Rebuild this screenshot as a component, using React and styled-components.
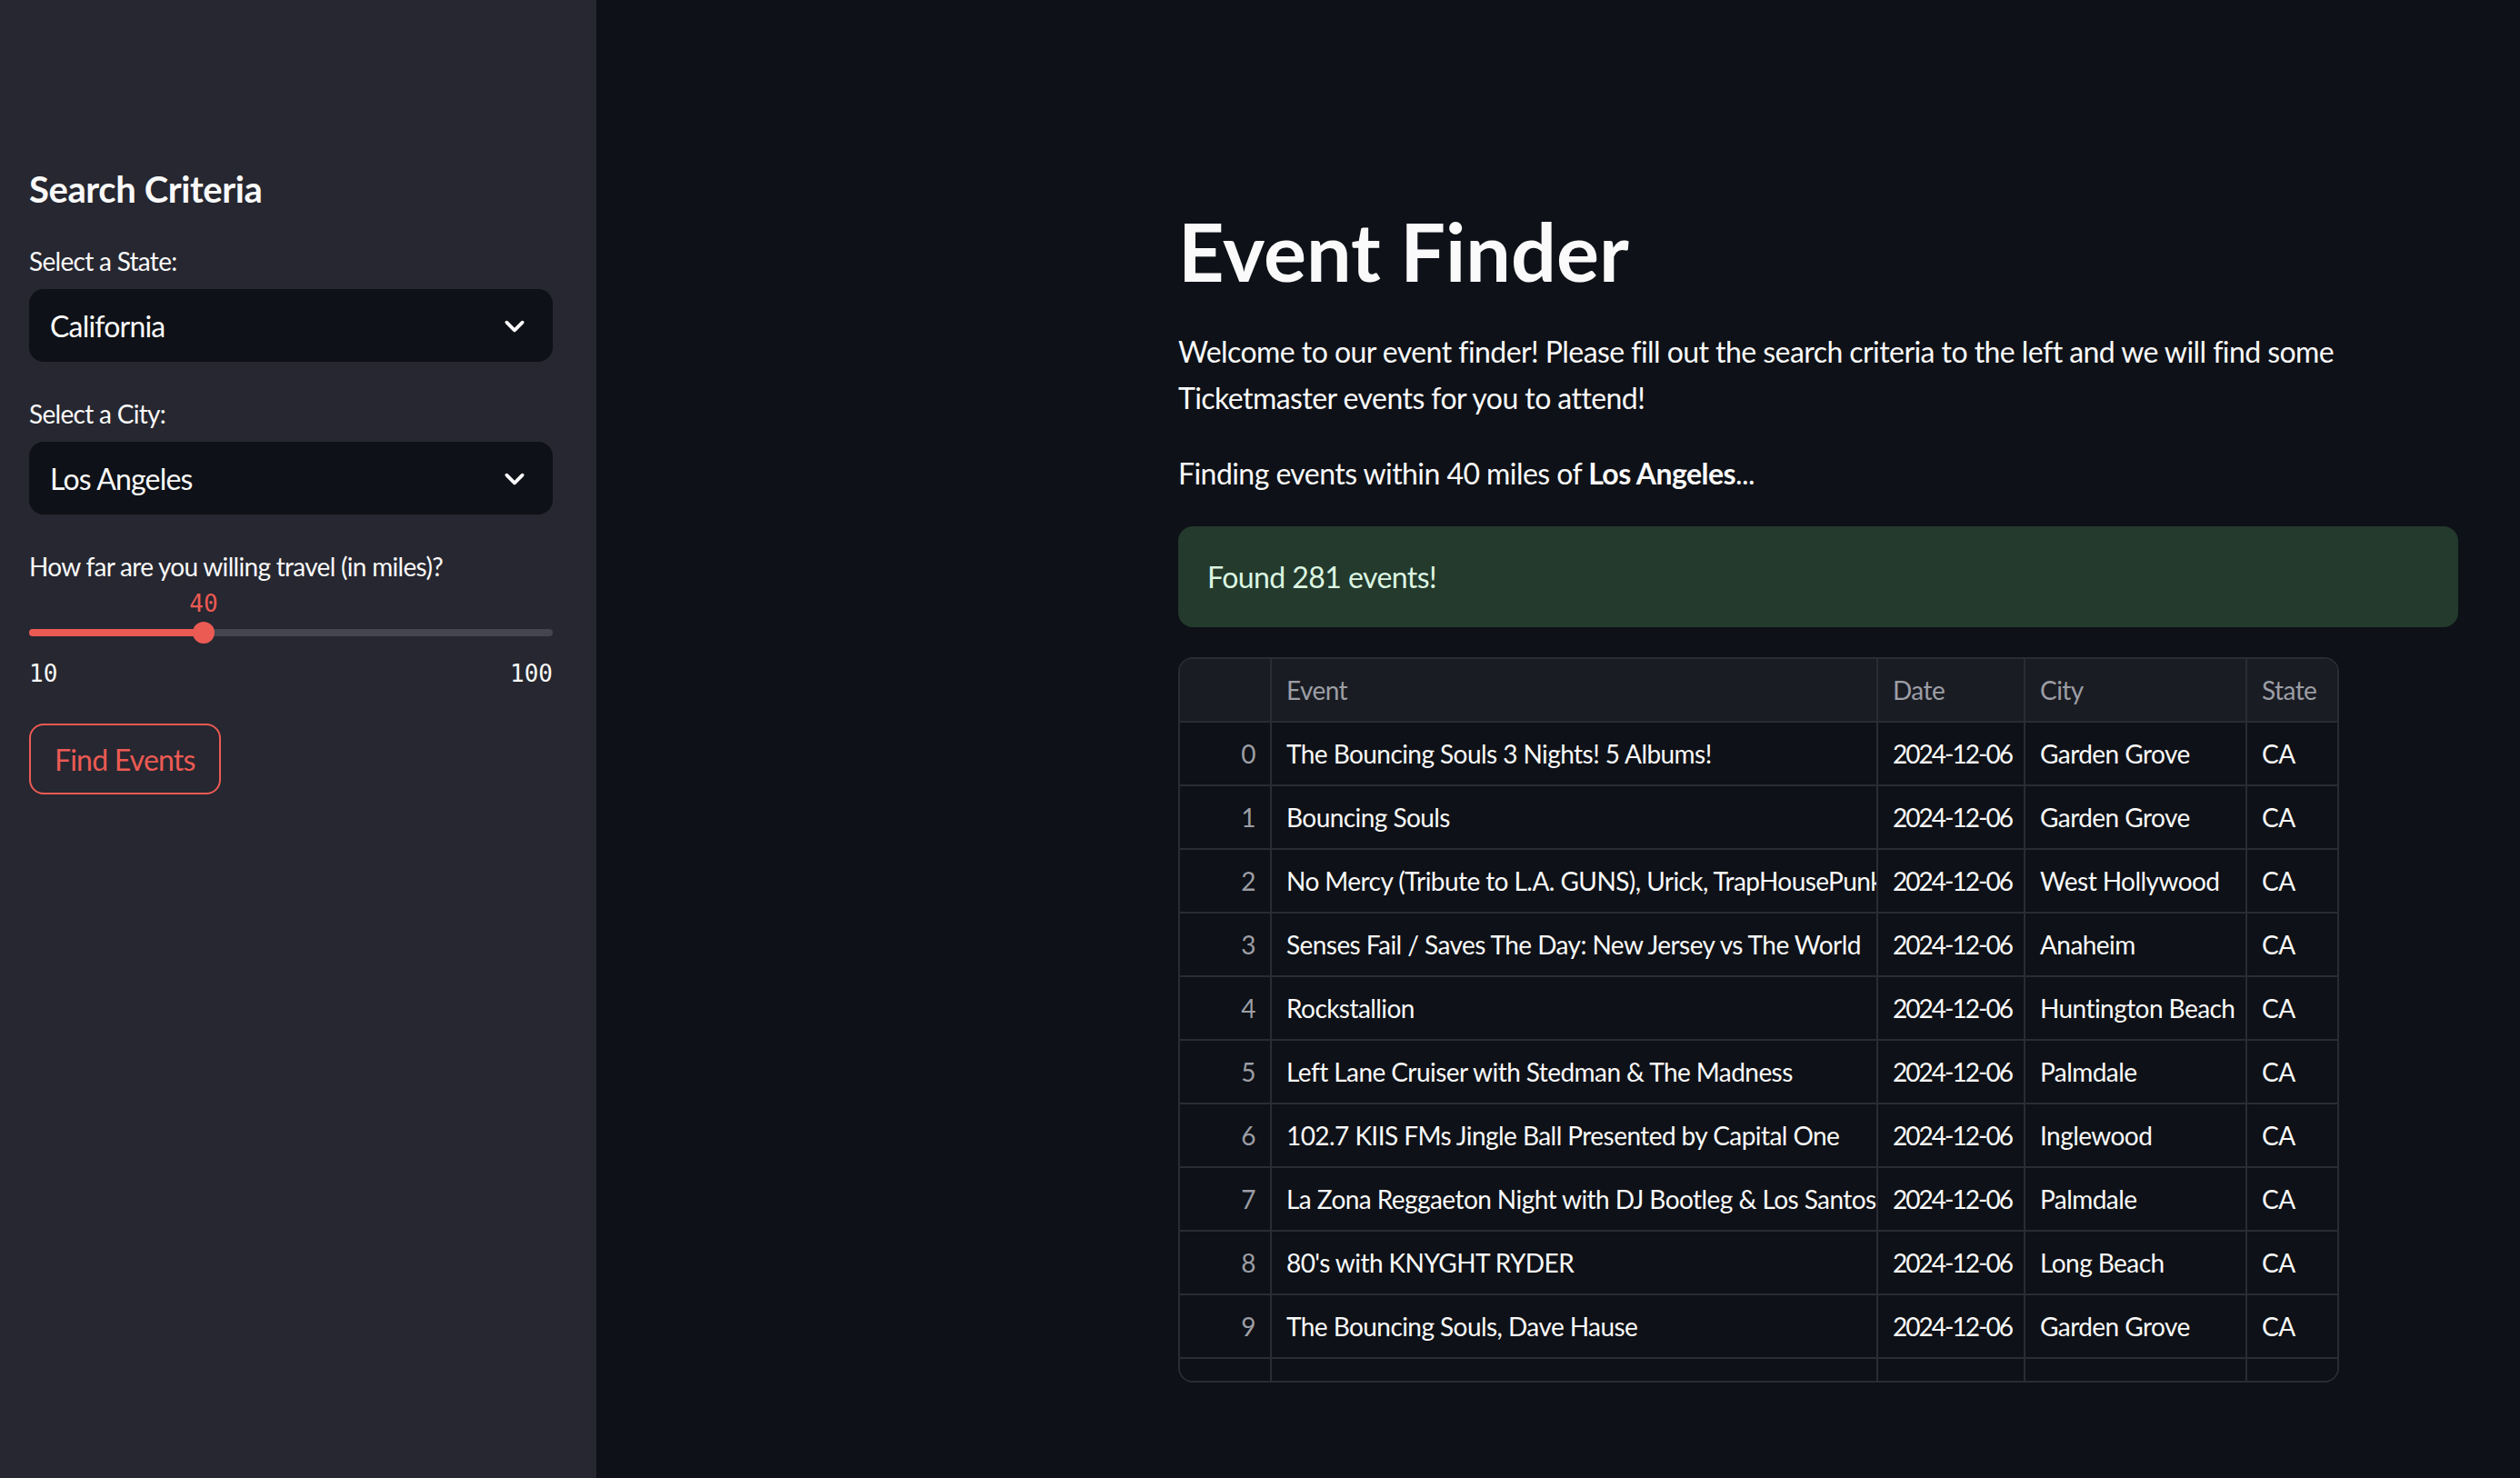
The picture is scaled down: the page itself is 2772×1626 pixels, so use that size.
import React from "react";
import styled, { createGlobalStyle } from "styled-components";

const GlobalStyle = createGlobalStyle`
  html, body {
    margin: 0;
    padding: 0;
    background: #0e1117;
  }
  body {
    font-family: Lato, "Noto Sans", sans-serif;
    letter-spacing: -0.035em;
    color: #fafafa;
  }
  * {
    box-sizing: border-box;
  }
`;

const RED = "#ec5a54";

const Page = styled.div`
  display: flex;
  height: 100vh;
  overflow: hidden;
`;

const Sidebar = styled.aside`
  width: 656px;
  flex-shrink: 0;
  background: #262730;
  padding: 184px 48px 0 32px;
  display: flex;
  flex-direction: column;
`;

const SideHeading = styled.h2`
  margin: 0 0 34px;
  font-size: 40px;
  line-height: 48px;
  font-weight: 700;
  letter-spacing: -0.01em;
`;

const Field = styled.div`
  display: flex;
  flex-direction: column;
  margin-bottom: 36px;
`;

const Label = styled.label`
  display: block;
  font-size: 28px;
  line-height: 42px;
  margin-bottom: 10px;
  letter-spacing: -0.025em;
`;

const Select = styled.div`
  height: 80px;
  border-radius: 16px;
  background: #0e1117;
  padding: 0 26px 0 23px;
  display: flex;
  align-items: center;
  justify-content: space-between;
  font-size: 32px;
  letter-spacing: -0.025em;
`;

const SliderBody = styled.div`
  position: relative;
  height: 54px;
  padding-top: 30px;
`;

const SliderValue = styled.span`
  position: absolute;
  top: -4px;
  transform: translateX(-50%);
  font-family: "DejaVu Sans Mono", "Liberation Mono", monospace;
  letter-spacing: 0;
  font-size: 26px;
  line-height: 28px;
  color: ${RED};
`;

const Track = styled.div`
  position: relative;
  height: 24px;
  display: flex;
  align-items: center;
`;

const Rail = styled.div`
  width: 100%;
  height: 8px;
  border-radius: 4px;
  background: #44454e;
  overflow: hidden;
`;

const Fill = styled.div`
  height: 100%;
  background: ${RED};
`;

const Thumb = styled.span`
  position: absolute;
  top: 0;
  width: 24px;
  height: 24px;
  border-radius: 50%;
  background: ${RED};
  transform: translateX(-50%);
`;

const MinMax = styled.div`
  display: flex;
  justify-content: space-between;
  margin-top: 19px;
  font-family: "DejaVu Sans Mono", "Liberation Mono", monospace;
  letter-spacing: 0;
  font-size: 26px;
  line-height: 28px;
`;

const Button = styled.button`
  align-self: flex-start;
  margin-top: 41px;
  height: 78px;
  padding: 0 26px;
  background: transparent;
  border: 2px solid ${RED};
  border-radius: 16px;
  color: ${RED};
  font-family: inherit;
  letter-spacing: -0.025em;
  font-size: 32px;
`;

const Main = styled.main`
  flex: 1;
  padding: 183px 0 0 640px;
`;

const Content = styled.div`
  width: 1408px;
`;

const Title = styled.h1`
  margin: 0;
  padding: 40px 0 32px;
  font-size: 88px;
  line-height: 106px;
  font-weight: 700;
  letter-spacing: 0;
`;

const Para = styled.p`
  margin: 0 0 32px;
  font-size: 32px;
  line-height: 51.2px;
`;

const Alert = styled.div`
  margin-bottom: 33px;
  padding: 30px 32px;
  border-radius: 16px;
  background: #233a2c;
  color: #dcf5e2;
  font-size: 32px;
  line-height: 51.2px;
`;

const Table = styled.div`
  width: 1277px;
  height: 798px;
  border: 2px solid #2a2c34;
  border-radius: 16px;
  overflow: hidden;
  display: grid;
  grid-template-columns: 101px 667px 162px 244px 99px;
  grid-auto-rows: 70px;
`;

const Cell = styled.div`
  display: flex;
  align-items: center;
  justify-content: ${(p) => (p.$index ? "flex-end" : "flex-start")};
  padding: 0 16px;
  border-bottom: 2px solid #2a2c34;
  border-right: ${(p) => (p.$last ? "none" : "2px solid #2a2c34")};
  background: ${(p) => (p.$head ? "#1a1c23" : "#0e1117")};
  color: ${(p) => (p.$head || p.$index ? "#9c9ea5" : "#fafafa")};
  font-size: 28px;
  letter-spacing: ${(p) => (p.$tight ? "-0.07em" : "inherit")};
  white-space: nowrap;
  overflow: hidden;
`;

const Chevron = () => (
  <svg width="32" height="32" viewBox="0 0 24 24" fill="none">
    <path d="M5.5 9.5l6.5 6.5 6.5-6.5" stroke="#fafafa" strokeWidth="2.8" strokeLinecap="round" strokeLinejoin="round" />
  </svg>
);

const events = [
  ["The Bouncing Souls 3 Nights! 5 Albums!", "2024-12-06", "Garden Grove"],
  ["Bouncing Souls", "2024-12-06", "Garden Grove"],
  ["No Mercy (Tribute to L.A. GUNS), Urick, TrapHousePunk,", "2024-12-06", "West Hollywood"],
  ["Senses Fail / Saves The Day: New Jersey vs The World", "2024-12-06", "Anaheim"],
  ["Rockstallion", "2024-12-06", "Huntington Beach"],
  ["Left Lane Cruiser with Stedman & The Madness", "2024-12-06", "Palmdale"],
  ["102.7 KIIS FMs Jingle Ball Presented by Capital One", "2024-12-06", "Inglewood"],
  ["La Zona Reggaeton Night with DJ Bootleg & Los Santos", "2024-12-06", "Palmdale"],
  ["80's with KNYGHT RYDER", "2024-12-06", "Long Beach"],
  ["The Bouncing Souls, Dave Hause", "2024-12-06", "Garden Grove"],
  ["Bouncing Souls", "2024-12-07", "Garden Grove"],
];

const MIN = 10;
const MAX = 100;
const distance = 40;

export default function App() {
  const pct = ((distance - MIN) / (MAX - MIN)) * 100;

  return (
    <>
      <GlobalStyle />
      <Page>
        <Sidebar>
          <SideHeading>Search Criteria</SideHeading>
          <Field>
            <Label>Select a State:</Label>
            <Select>
              California
              <Chevron />
            </Select>
          </Field>
          <Field>
            <Label>Select a City:</Label>
            <Select>
              Los Angeles
              <Chevron />
            </Select>
          </Field>
          <div>
            <Label>How far are you willing travel (in miles)?</Label>
            <SliderBody>
              <SliderValue style={{ left: `${pct}%` }}>{distance}</SliderValue>
              <Track>
                <Rail>
                  <Fill style={{ width: `${pct}%` }} />
                </Rail>
                <Thumb style={{ left: `${pct}%` }} />
              </Track>
            </SliderBody>
            <MinMax>
              <span>{MIN}</span>
              <span>{MAX}</span>
            </MinMax>
          </div>
          <Button>Find Events</Button>
        </Sidebar>

        <Main>
          <Content>
            <Title>Event Finder</Title>
            <Para>
              Welcome to our event finder! Please fill out the search criteria to the left and we will find some
              Ticketmaster events for you to attend!
            </Para>
            <Para>
              Finding events within {distance} miles of <b>Los Angeles</b>...
            </Para>
            <Alert>Found 281 events!</Alert>
            <Table>
              <Cell $head />
              <Cell $head>Event</Cell>
              <Cell $head>Date</Cell>
              <Cell $head>City</Cell>
              <Cell $head $last>State</Cell>
              {events.map((ev, i) => (
                <React.Fragment key={i}>
                  <Cell $index>{i}</Cell>
                  <Cell>{ev[0]}</Cell>
                  <Cell $tight>{ev[1]}</Cell>
                  <Cell>{ev[2]}</Cell>
                  <Cell $last>CA</Cell>
                </React.Fragment>
              ))}
            </Table>
          </Content>
        </Main>
      </Page>
    </>
  );
}
